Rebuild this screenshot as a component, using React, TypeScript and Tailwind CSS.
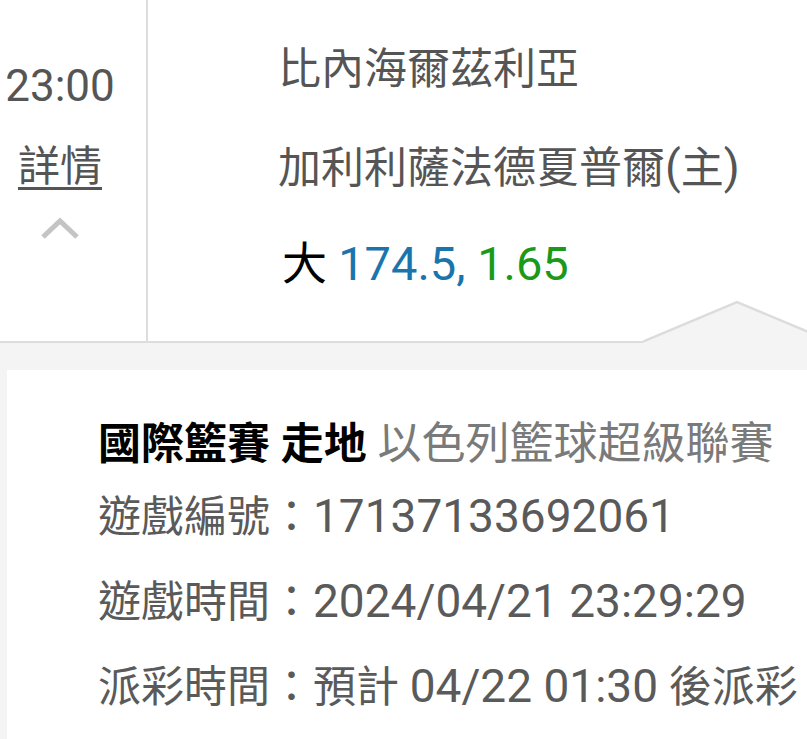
import React from 'react';

const font = "font-['Roboto','Noto_Sans_CJK_TC',sans-serif]";

// digits in the original render a touch larger than the CJK glyphs
const Num: React.FC<{ children: React.ReactNode }> = ({ children }) => (
  <span className="text-[46px]">{children}</span>
);

const InfoRow: React.FC<{ label: string; children: React.ReactNode }> = ({ label, children }) => (
  <div className="text-[43px] leading-[52px] text-[#5a5a5a] whitespace-nowrap">
    {label}：{children}
  </div>
);

const App: React.FC = () => {
  return (
    <div className={`w-[807px] h-[739px] overflow-hidden bg-white ${font}`}>
      {/* Match row */}
      <div className="relative flex h-[343px] border-b-2 border-[#dddddd]">
        <div className="w-[148px] shrink-0 border-r-2 border-[#dddddd]">
          <div className="w-[120px] flex flex-col items-center pt-[60px]">
            <div className="text-[44px] leading-[52px] text-[#555555]">23:00</div>
            <a className="mt-[29px] text-[42px] leading-[52px] text-[#555555] underline underline-offset-[6px] decoration-[3px]">
              詳情
            </a>
            <svg width="40" height="24" viewBox="0 0 40 24" className="mt-[23px]">
              <polyline points="3,21 20,5 37,21" fill="none" stroke="#c4c4c4" strokeWidth="5" />
            </svg>
          </div>
        </div>
        <div className="flex-1 flex flex-col pl-[130px] pt-[43px]">
          <div className="text-[43px] leading-[52px] text-[#555555]">比內海爾茲利亞</div>
          <div className="mt-[46px] text-[43px] leading-[52px] text-[#555555]">
            加利利薩法德夏普爾<Num>(</Num>主<Num>)</Num>
          </div>
          <div className="mt-[42px] pl-[4px] text-[47px] leading-[56px] whitespace-nowrap">
            <span className="text-black text-[45px]">大 </span>
            <span className="text-[#1b75ad]">174.5, </span>
            <span className="text-[#1a991a]">1.65</span>
          </div>
        </div>
        <svg
          width="190"
          height="44"
          viewBox="0 0 190 44"
          className="absolute left-[643px] top-[300px]"
        >
          <polygon points="0,41.5 94,2 188,41.5 190,41.5 190,44 0,44" fill="#f4f4f4" />
          <polyline points="0,41.5 94,2 188,41.5" fill="none" stroke="#dcdcdc" strokeWidth="2.5" />
        </svg>
      </div>

      {/* Bet detail */}
      <div className="bg-[#f4f4f4] pt-[27px] pl-[7px] h-[396px]">
        <div className="bg-white h-full pl-[91px] pt-[48px] flex flex-col">
          <div className="text-[43px] leading-[52px] whitespace-nowrap">
            <span className="font-bold text-black">國際籃賽 走地</span>
            <span className="text-[44px] text-[#7a7a7a]"> 以色列籃球超級聯賽</span>
          </div>
          <div className="mt-[20px] flex flex-col gap-[32px]">
            <InfoRow label="遊戲編號">
              <Num>17137133692061</Num>
            </InfoRow>
            <InfoRow label="遊戲時間">
              <Num>2024/04/21 23:29:29</Num>
            </InfoRow>
            <InfoRow label="派彩時間">
              預計 <Num>04/22 01:30</Num> 後派彩
            </InfoRow>
          </div>
        </div>
      </div>
    </div>
  );
};

export default App;
